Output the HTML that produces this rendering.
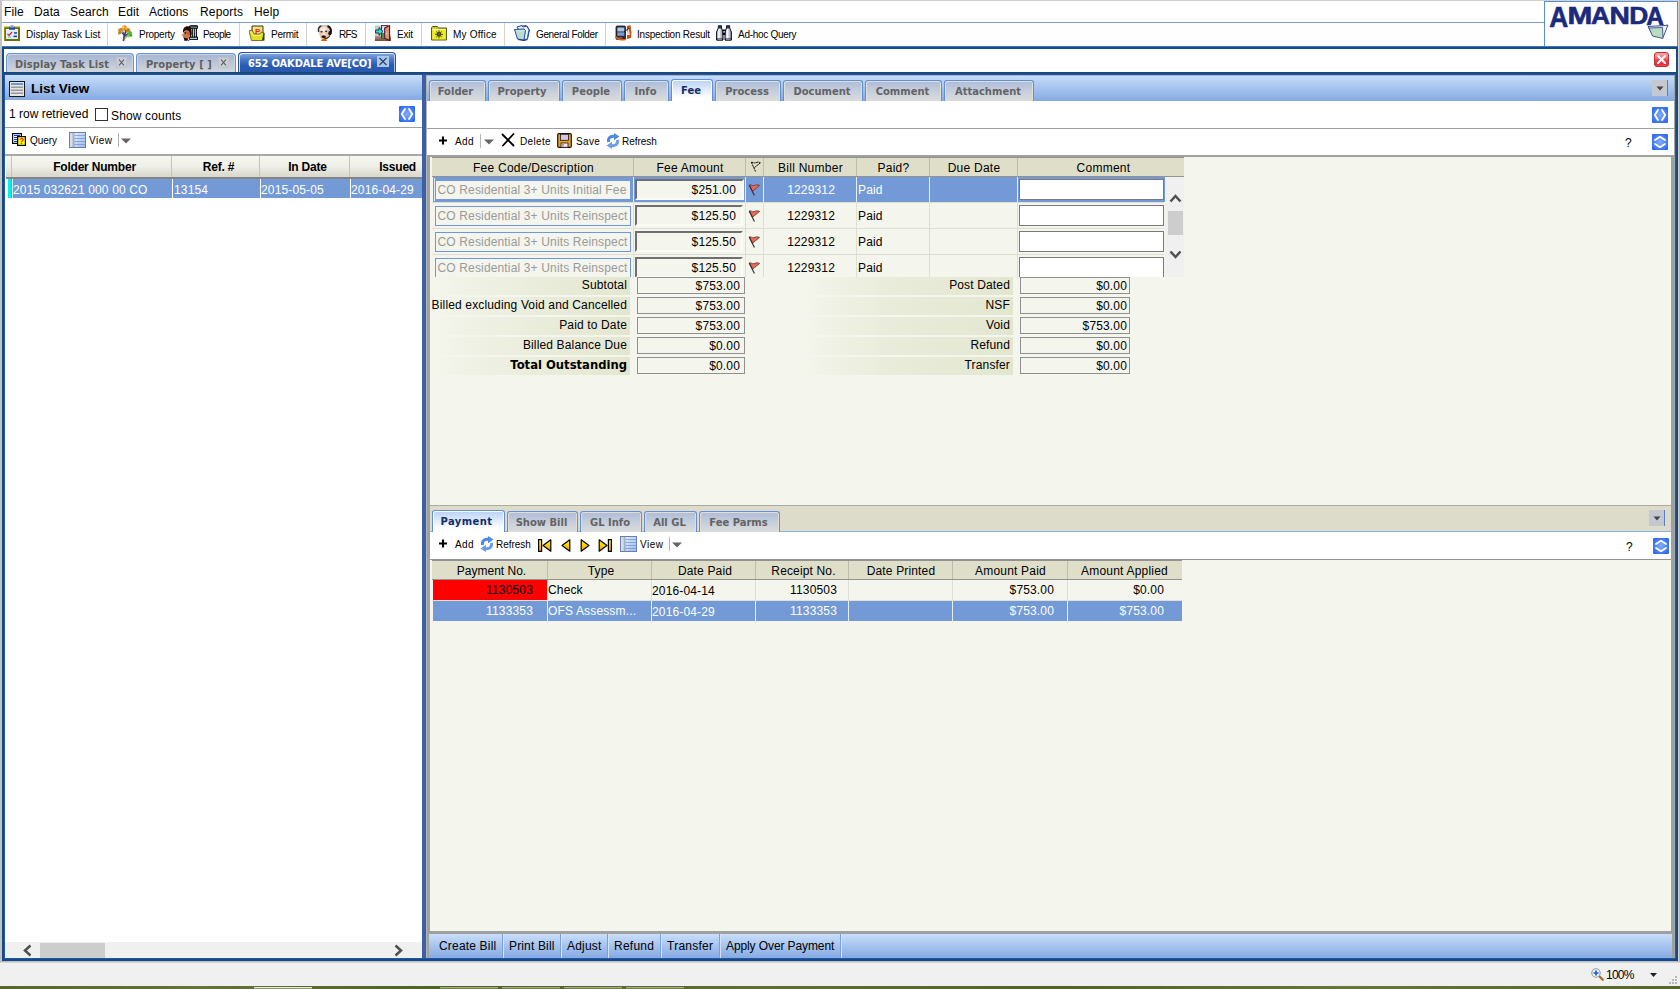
<!DOCTYPE html>
<html>
<head>
<meta charset="utf-8">
<title>AMANDA</title>
<style>
*{box-sizing:border-box;margin:0;padding:0}
html,body{width:1680px;height:989px;overflow:hidden;background:#fff}
body{font-family:"Liberation Sans",sans-serif;font-size:12px;color:#000;position:relative}
.a{position:absolute}
.t{position:absolute;white-space:nowrap;line-height:14px;letter-spacing:.15px}
.tb{position:absolute;white-space:nowrap;font-size:10px;line-height:12px;letter-spacing:-.05px}
.tabf{font-family:"DejaVu Sans Condensed","DejaVu Sans","Liberation Sans",sans-serif;font-weight:700}
.sep{position:absolute;width:1px;background:#d5d2c6}
/* tabs */
.ttab{position:absolute;top:53px;height:19px;border:1px solid #6492dc;border-bottom:none;border-radius:4px 4px 0 0;background:linear-gradient(#a3b4d3,#bcc6d8 50%,#d3d6da);color:#5f5f5f;font-size:11px;line-height:17px;white-space:nowrap;letter-spacing:.1px;box-shadow:inset 1px 1px 0 #cfd6e2,inset -1px 0 0 #cfd6e2}
.ttab.on{top:52px;height:20px;background:linear-gradient(#8aa9de,#4b78c4 35%,#2b5bb0 65%,#2958ac);border-color:#2a56a8;color:#fff;box-shadow:inset 1px 1px 0 rgba(255,255,255,.8),inset -1px 0 0 rgba(255,255,255,.6)}
.rtab{position:absolute;top:80px;height:21px;padding:1px 2px 0 0;border:1px solid #5f8fd6;border-bottom:none;border-radius:3px 3px 0 0;background:linear-gradient(#aebcd8,#c6cedc 50%,#dbdcdb);color:#636363;font-size:11.1px;line-height:19px;text-align:center;white-space:nowrap;box-shadow:inset 1px 1px 0 #e2dfd8,inset -1px 0 0 #e2dfd8}
.rtab.on{top:79px;height:22px;background:linear-gradient(#b9d1f5,#dce8fa 40%,#fff 85%);color:#122f6c;box-shadow:inset 1px 1px 0 #fff,inset -1px 0 0 #fff}
.btab{position:absolute;top:511px;height:21px;padding:1px 2px 0 0;border:1px solid #5f8fd6;border-bottom:none;border-radius:3px 3px 0 0;background:linear-gradient(#aebcd8,#c6cedc 50%,#dbdcdb);color:#636363;font-size:11.1px;line-height:19px;text-align:center;white-space:nowrap;box-shadow:inset 1px 1px 0 #e2dfd8,inset -1px 0 0 #e2dfd8}
.btab.on{top:510px;height:22px;background:linear-gradient(#b9d1f5,#dce8fa 40%,#fff 85%);color:#122f6c;box-shadow:inset 1px 1px 0 #fff,inset -1px 0 0 #fff}
.hd{position:absolute;text-align:center;white-space:nowrap;letter-spacing:.15px}
.inp{position:absolute;height:20px;border:1px solid #6f97dc;background:#f4f5ec;color:#9a9a9a;white-space:nowrap;overflow:hidden;line-height:19px;padding-left:1.5px;letter-spacing:.15px}
.amt{position:absolute;height:19px;border:2px solid;border-color:#6f6f6f #fbfbf8 #fbfbf8 #6f6f6f;background:#f4f5ec;text-align:right;padding-right:6px;line-height:19px;letter-spacing:.15px}
.cmt{position:absolute;left:1019px;width:145px;height:21px;border:1px solid #7a7a7a;background:#fff}
.sum{position:absolute;height:17px;border:1px solid #8e8f8f;background:#f4f5ec;text-align:right;padding-right:4px;line-height:17px;letter-spacing:.15px}
.lab{position:absolute;height:18px;text-align:right;padding-right:3px;line-height:17px;white-space:nowrap;letter-spacing:.15px}
.cell{position:absolute;white-space:nowrap;line-height:14px;letter-spacing:.15px}
</style>
</head>
<body>
<!-- window chrome -->
<div class="a" style="left:0;top:0;width:1680px;height:1px;background:#d0d0d0"></div>
<div class="a" style="left:0;top:0;width:2px;height:962px;background:#c3c3c3"></div>
<div class="a" style="left:1678px;top:0;width:1px;height:962px;background:#d4d0cc"></div><div class="a" style="left:1679px;top:0;width:1px;height:962px;background:#b4b4b4"></div>

<!-- MENUBAR -->
<div id="menubar">
<span class="t" style="left:4px;top:5px">File</span>
<span class="t" style="left:34px;top:5px">Data</span>
<span class="t" style="left:70px;top:5px">Search</span>
<span class="t" style="left:118px;top:5px">Edit</span>
<span class="t" style="left:149px;top:5px;letter-spacing:0">Actions</span>
<span class="t" style="left:200px;top:5px">Reports</span>
<span class="t" style="left:254px;top:5px">Help</span>
</div>
<div class="a" style="left:2px;top:22px;width:1542px;height:1px;background:#7d9fd8"></div>

<!-- TOOLBAR -->
<div id="toolbar">
<svg class="a" style="left:4px;top:25px" width="16" height="16" viewBox="0 0 16 16"><rect x="0" y="2" width="16" height="14" fill="#6c7008"/><path d="M0 16V2h16" stroke="#a4a80c" stroke-width="1.2" fill="none"/><rect x="2" y="4" width="12" height="10" fill="#dcecfc"/><rect x="2" y="4" width="12" height="1.2" fill="#fff"/><rect x="5" y="1.8" width="6" height="3" fill="#2c4aa4"/><rect x="6.3" y="0" width="3.4" height="2.5" fill="#b4c0dc"/><rect x="7.3" y=".8" width="1.4" height="1" fill="#5a6a9a"/><path d="M3.5 8.8l1.5 1.5L8 7" stroke="#e81830" stroke-width="1.2" fill="none"/><rect x="10" y="7.2" width="3" height="1.5" fill="#203c98"/><rect x="9.5" y="10.6" width="3.5" height="1.5" fill="#203c98"/><rect x="4" y="11.5" width="3" height="1" fill="#8c9ccc"/></svg>
<svg class="a" style="left:117px;top:25px" width="16" height="16" viewBox="0 0 16 16"><path d="M6.5 16L7.2 10 4 6.5M7.2 10.5L9.5 5.5M7 12l4.5-4" stroke="#3c3a70" stroke-width="1.6" fill="none"/><path d="M7 15l3.5-4.5" stroke="#7a9a30" stroke-width="1" fill="none"/><circle cx="3.8" cy="5.5" r="2.6" fill="#d08424"/><circle cx="7.5" cy="3" r="2.7" fill="#e09a2c"/><circle cx="10.8" cy="5.2" r="2.3" fill="#c87a28"/><circle cx="2.5" cy="8" r="1.5" fill="#9a8a2c"/><circle cx="6" cy="2.3" r="1.2" fill="#f2d468"/><circle cx="9.5" cy="3.2" r="1" fill="#f0c050"/><circle cx="5" cy="6.5" r="1" fill="#e8b048"/><circle cx="12.8" cy="8.5" r="2.4" fill="#58b832"/><circle cx="11.3" cy="11" r="1.6" fill="#7cca4a"/><circle cx="14" cy="10.5" r="1.2" fill="#3e9a28"/><path d="M6 6.5l1.5 2.5M8.5 5l-.5 3" stroke="#4a4a80" stroke-width=".9"/></svg>
<svg class="a" style="left:181px;top:25px" width="17" height="16" viewBox="0 0 17 16"><path d="M9 1.2L12.7 0l3.8 1.2z" fill="#a8d8d8" stroke="#000" stroke-width=".8"/><rect x="8.6" y="1.2" width="8" height="2" fill="#a8d8d8" stroke="#000" stroke-width=".9"/><rect x="9.7" y="3.2" width="5.8" height="9" fill="#c0e4e4" stroke="#000" stroke-width=".9"/><path d="M11.6 3.2v9M13.6 3.2v9" stroke="#000" stroke-width=".9"/><rect x="8.6" y="12.2" width="8" height="2.2" fill="#a8d8d8" stroke="#000" stroke-width=".9"/><path d="M2 7C1.5 2 6.5 -.2 10 2.5l.8 6.5-2 4-.6-6C6.5 5 4 5.2 2.6 7.5z" fill="#1a0c08"/><path d="M2.5 7C4 4.8 7 5 8.2 6.5l.5 4.5-1.5 3.7-3.2.5-1.5-2.5-1.3-2.2 1.1-1.3z" fill="#d07646"/><path d="M5 6.5c1 0 2.2.3 3 1l.4 3.5c-1-.5-2-2-3.4-4.5z" fill="#b85c34"/><ellipse cx="1.7" cy="9.9" rx="1.2" ry="1" fill="#f28a8a"/><path d="M3.5 7.6l1.8.2" stroke="#1a0c08" stroke-width=".9"/><circle cx="4.3" cy="8.6" r=".6" fill="#1a0c08"/><path d="M2.6 12.6l4.6 1.2-1 2.2-2.7-.6z" fill="#1a0c08"/><path d="M3 15.5l1 .5M7 15.3l1.5.7" stroke="#2a4ae0" stroke-width="1"/></svg>
<svg class="a" style="left:249px;top:25px" width="16" height="16" viewBox="0 0 16 16"><path d="M3 1h11v11H3z" fill="#f2d86a" stroke="#3a3a20" stroke-width="1"/><path d="M4 2h9v7H4z" fill="#f6e27e"/><text x="8.6" y="8.5" font-family="Liberation Sans, sans-serif" font-weight="700" font-size="8" fill="#e8281a" text-anchor="middle">P</text><path d="M0 6l3-1 2 4h6l1.5-2 2.5 1-1 7.5H2.5z" fill="#e4e020" stroke="#55551a" stroke-width=".8"/><path d="M13 15.5h2.5V8l-1-.5z" fill="#3a3a1a"/><path d="M1 7l2 .5 1.5 3h7l1-1.5" fill="none" stroke="#f8f890" stroke-width=".8"/></svg>
<svg class="a" style="left:316px;top:25px" width="17" height="16" viewBox="0 0 17 16"><path d="M3 2.5C5 .2 11 .2 13 2.5L13.5 8C13 12 10 15 8 15.5 6 15 3.5 12 3 8z" fill="#f2c4a6"/><ellipse cx="7.5" cy="4.5" rx="3.2" ry="2.3" fill="#fff" opacity=".75"/><ellipse cx="7.8" cy="9" rx="1.6" ry="1.4" fill="#fff" opacity=".6"/><path d="M2.6 7C1.8 3.5 3 1.5 5.5 .8" stroke="#3a3030" stroke-width="1.5" fill="none"/><path d="M5 .8C8 -.3 11 .2 12.5 1.5" stroke="#b8b0a8" stroke-width="1" fill="none"/><path d="M11.5 1C15 2.2 15.5 6 14.3 9" stroke="#151515" stroke-width="2.2" fill="none"/><ellipse cx="13.8" cy="8.3" rx="1.5" ry="2.3" fill="#151515"/><path d="M13.8 10.5C12.5 13.3 10 13.8 8 12.8" stroke="#2a2a2a" stroke-width="1.2" fill="none"/><ellipse cx="5.6" cy="6.8" rx="1.2" ry=".8" fill="#1c2848"/><ellipse cx="10" cy="6.3" rx="1.2" ry=".8" fill="#1c2848"/><ellipse cx="7.6" cy="11.8" rx="2.2" ry="1.2" fill="#1a1010"/><path d="M4.8 15l3.2-1.5 3.5 1.5-1 1H5.5z" fill="#d8601a"/></svg>
<svg class="a" style="left:375px;top:25px" width="16" height="16" viewBox="0 0 16 16"><defs><linearGradient id="fl" x1="0" y1="0" x2="0" y2="1"><stop offset="0" stop-color="#b89888"/><stop offset="1" stop-color="#6e4c3c"/></linearGradient></defs><rect x="0" y=".5" width="8" height="11" fill="#b2d8c4"/><rect x="0" y="11" width="16" height="5" fill="url(#fl)"/><rect x="6.5" y=".6" width="6" height="12.4" fill="#cfe4f6" stroke="#5a1030" stroke-width=".9"/><rect x="7" y="8" width="2.5" height="4.5" fill="#3a9a3a"/><path d="M9.7 3L14.6 .6v15L9.7 13.2z" fill="#c8906a" stroke="#5a1030" stroke-width="1.1" stroke-linejoin="round"/><path d="M10.5 4l3-1.5v11.5l-3-1.3z" fill="#d8a880" opacity=".6"/><rect x="11.2" y="8" width="1" height="1.3" fill="#f4e8e0"/><path d="M.6 5H4V2.6L8 6.5 4 10.4V8H.6z" fill="#22e6e6" stroke="#4a0a2a" stroke-width=".9" stroke-linejoin="round"/></svg>
<svg class="a" style="left:431px;top:26px" width="16" height="15" viewBox="0 0 16 15"><path d="M.5 3V1.5L1.5.5h5l1 1.5h8V14H.5z" fill="#c8c83a" stroke="#5a5a14" stroke-width="1"/><rect x="1.2" y="3" width="13.6" height="10.3" fill="#ecec28"/><path d="M1.2 3h13.6v1H1.2z" fill="#f8f8a0"/><circle cx="8" cy="8.3" r="2.3" fill="#3a3a14"/><path d="M8 4.3v8M4 8.3h8M5.2 5.5l5.6 5.6M10.8 5.5l-5.6 5.6" stroke="#4a4a10" stroke-width="1"/><circle cx="8" cy="8.3" r="1" fill="#6a6a10"/></svg>
<svg class="a" style="left:514px;top:25px" width="16" height="16" viewBox="0 0 16 16"><path d="M3 2l5-1.5 1 1.5 4-1 2.5 4-2 9-3 .5z" fill="#e8f0f8" stroke="#2a4a9a" stroke-width="1"/><path d="M8 1l4-.5 3 4-1.5 8" fill="none" stroke="#2a4a9a" stroke-width=".9"/><path d="M.5 4.5l9.5-.5 1.5 1.5-1.5 9.5-6.5-1z" fill="#b8dcd0" stroke="#2a4a9a" stroke-width="1"/><path d="M2 6l7.5-.4" stroke="#d8f0e8" stroke-width=".8"/><path d="M4 14.5l6 1 3.5-1" stroke="#1a3a8a" stroke-width="1.2" fill="none"/></svg>
<svg class="a" style="left:615px;top:25px" width="17" height="16" viewBox="0 0 17 16"><path d="M12 1l3.5-1 1 8-.5 5-4 1z" fill="#c8501a"/><path d="M13.5 3l1.5 7h-3.5z" fill="#f0e0d0"/><rect x="1" y="1" width="9.5" height="13.5" rx="1.2" fill="#2a2a34" stroke="#15151c" stroke-width=".8"/><rect x="2.3" y="2.5" width="7" height="4" fill="#a8c4e8"/><rect x="2.3" y="7.3" width="7" height="3.5" fill="#7a9cd0"/><rect x="4" y="12" width="3.5" height="1.5" rx=".7" fill="#666"/><path d="M0 12c2 3 6 4 10 3.5l2-2-3 .5c-3 0-6-1-8-3z" fill="#d8601a"/><path d="M9 7l5-4" stroke="#222" stroke-width="1"/></svg>
<svg class="a" style="left:716px;top:25px" width="16" height="16" viewBox="0 0 16 16"><defs><linearGradient id="bg1" x1="0" y1="0" x2="1" y2="0"><stop offset="0" stop-color="#9aa4b4"/><stop offset=".35" stop-color="#fff"/><stop offset="1" stop-color="#7a8698"/></linearGradient></defs><path d="M.6 7L2.3 3V.8h3.2V3L7 7v8H.6z" fill="url(#bg1)" stroke="#0c0c14" stroke-width="1"/><path d="M9 7l1.5-4V.8h3.2V3L15.4 7v8H9z" fill="url(#bg1)" stroke="#0c0c14" stroke-width="1"/><rect x="2.3" y=".5" width="3.2" height="3" fill="#26344e"/><rect x="10.5" y=".5" width="3.2" height="3" fill="#26344e"/><rect x="6.5" y="4.5" width="3" height="5.5" fill="#0c0c14"/><rect x="7.5" y="6" width="1.2" height="1.6" fill="#fff"/><rect x=".6" y="13.5" width="6.4" height="2" fill="#1a1a22"/><rect x="9" y="13.5" width="6.4" height="2" fill="#1a1a22"/><path d="M1.5 14.5h4.5M10 14.5h4.5" stroke="#9aa4b4" stroke-width=".8"/></svg>
<span class="tb" style="left:26px;top:29px;letter-spacing:0px">Display Task List</span>
<span class="tb" style="left:139px;top:29px;letter-spacing:-0.26px">Property</span>
<span class="tb" style="left:203px;top:29px;letter-spacing:-0.6px">People</span>
<span class="tb" style="left:271px;top:29px;letter-spacing:-0.28px">Permit</span>
<span class="tb" style="left:339px;top:29px;letter-spacing:-0.8px">RFS</span>
<span class="tb" style="left:397px;top:29px;letter-spacing:-0.23px">Exit</span>
<span class="tb" style="left:453px;top:29px;letter-spacing:0.2px">My Office</span>
<span class="tb" style="left:536px;top:29px;letter-spacing:-0.36px">General Folder</span>
<span class="tb" style="left:637px;top:29px;letter-spacing:-0.23px">Inspection Result</span>
<span class="tb" style="left:738px;top:29px;letter-spacing:-0.28px">Ad-hoc Query</span>
<div class="sep" style="left:107px;top:23px;height:23px"></div>
<div class="sep" style="left:239px;top:23px;height:23px"></div>
<div class="sep" style="left:306px;top:23px;height:23px"></div>
<div class="sep" style="left:365px;top:23px;height:23px"></div>
<div class="sep" style="left:421px;top:23px;height:23px"></div>
<div class="sep" style="left:504px;top:23px;height:23px"></div>
<div class="sep" style="left:605px;top:23px;height:23px"></div>
</div>

<!-- LOGO -->
<div id="logo" class="a" style="left:1544px;top:1px;width:134px;height:45px;border:1px solid #5b8fd0;border-bottom:none;background:#fff">
<svg class="a" style="left:0;top:0" width="132" height="44" viewBox="0 0 132 44"><g font-family="Liberation Sans, sans-serif" font-weight="700" fill="#1c2a7c" stroke="#1c2a7c" stroke-width=".6"><text x="4.2" y="25.3" font-size="29" textLength="19" lengthAdjust="spacingAndGlyphs">A</text><text x="22.6" y="21.5" font-size="23.5" textLength="24.8" lengthAdjust="spacingAndGlyphs">M</text><text x="46" y="21.5" font-size="23.5" textLength="19" lengthAdjust="spacingAndGlyphs">A</text><text x="64.6" y="21.5" font-size="23.5" textLength="20.4" lengthAdjust="spacingAndGlyphs">N</text><text x="84.2" y="21.5" font-size="23.5" textLength="19" lengthAdjust="spacingAndGlyphs">D</text><text x="101.3" y="22.8" font-size="25" textLength="17.7" lengthAdjust="spacingAndGlyphs">A</text></g><path d="M103 24.5l17-1 3-.5-5 12.5-10-2z" fill="#eef6f2" stroke="#2a3a8c" stroke-width=".9"/><path d="M104 26l13.5-.5.5 11-10.5-2.5z" fill="#b8dcc0" stroke="#2a3a8c" stroke-width=".8"/></svg>
</div>

<!-- MAIN FRAME -->
<div id="frame" class="a" style="left:2px;top:47px;width:1676px;height:914px;border:2px solid #144b84;background:#fff"></div>
<div class="a" style="left:2px;top:46px;width:1676px;height:1px;background:#3f78c0"></div>
<div class="a" style="left:4px;top:74px;width:1672px;height:885px;border:1px solid #2354ae"></div>

<!-- TOP TABS -->
<div id="toptabs">
<div class="ttab tabf" style="left:6px;width:128px"><span class="a" style="left:8px;top:2px">Display Task List</span></div>
<svg class="a" style="left:116px;top:57px" width="11" height="11" viewBox="0 0 11 11"><rect x=".5" y=".5" width="10" height="10" fill="#c9ced6" stroke="#bfc4cc"/><path d="M3 2.5L8 8.5M8 2.5L3 8.5" stroke="#555" stroke-width="1.1" fill="none"/></svg>
<div class="ttab tabf" style="left:136px;width:100px"><span class="a" style="left:9px;top:2px">Property [ ]</span></div>
<svg class="a" style="left:218px;top:57px" width="11" height="11" viewBox="0 0 11 11"><rect x=".5" y=".5" width="10" height="10" fill="#c9ced6" stroke="#bfc4cc"/><path d="M3 2.5L8 8.5M8 2.5L3 8.5" stroke="#555" stroke-width="1.1" fill="none"/></svg>
<div class="ttab on tabf" style="left:238px;width:158px"><span class="a" style="left:9px;top:2px;letter-spacing:-.13px">652 OAKDALE AVE[CO]</span></div>
<svg class="a" style="left:377px;top:56px" width="12" height="11" viewBox="0 0 12 11"><rect width="12" height="11" fill="#a8c8f0"/><path d="M2.5 2L9.5 9M9.5 2L2.5 9" stroke="#2e3e50" stroke-width="1.1" fill="none"/></svg>
<svg class="a" style="left:1654px;top:52px" width="15" height="15" viewBox="0 0 15 15"><defs><linearGradient id="rg" x1="0" y1="0" x2="0" y2="1"><stop offset="0" stop-color="#f6b0b0"/><stop offset=".45" stop-color="#ee6670"/><stop offset=".55" stop-color="#ea3c48"/><stop offset=".9" stop-color="#e83040"/><stop offset="1" stop-color="#f07838"/></linearGradient></defs><rect x=".5" y=".5" width="14" height="14" rx="2.5" fill="url(#rg)" stroke="#c03038"/><path d="M4 4l7 7M11 4l-7 7" stroke="#fff" stroke-width="2" stroke-linecap="round"/></svg>
<div class="a" style="left:4px;top:72px;width:1672px;height:2px;background:#17497f"></div>
</div>

<!-- LEFT PANEL -->
<div id="left">
<div class="a" style="left:5px;top:75px;width:417px;height:25px;background:linear-gradient(#c9defa,#a9c6f0 45%,#86aae2)"></div>
<svg class="a" style="left:9px;top:81px" width="16" height="16" viewBox="0 0 16 16"><rect x=".5" y=".5" width="15" height="15" fill="#e4e4e4" stroke="#1a1a1a"/><rect x="2" y="2" width="12" height="2" fill="#6a9ad8"/><rect x="2" y="5.5" width="12" height="1.5" fill="#9a9a9a"/><rect x="2" y="8.5" width="12" height="1.5" fill="#9a9a9a"/><rect x="2" y="11.5" width="12" height="1.5" fill="#9a9a9a"/></svg>
<span class="a" style="left:31px;top:81px;font-weight:700;font-size:13.5px;line-height:16px;white-space:nowrap">List View</span>
<span class="t" style="left:9px;top:107px;letter-spacing:0">1 row retrieved</span>
<div class="a" style="left:95px;top:108px;width:13px;height:13px;border:1px solid #333;background:#fff"></div>
<span class="t" style="left:111px;top:109px;letter-spacing:.15px">Show counts</span>
<svg class="a" style="left:399px;top:106px" width="16" height="16" viewBox="0 0 16 16"><defs><radialGradient id="bb1" cx=".5" cy=".5" r=".7"><stop offset="0" stop-color="#86acfa"/><stop offset=".55" stop-color="#4a82f4"/><stop offset="1" stop-color="#1f5ce8"/></radialGradient></defs><rect width="16" height="16" rx="1.2" fill="url(#bb1)"/><path d="M6 3L2.8 8 6 13M10 3l3.2 5L10 13" stroke="#fff" stroke-width="1.8" fill="none" stroke-linecap="round" stroke-linejoin="round"/></svg>
<div class="a" style="left:5px;top:127px;width:417px;height:1px;background:#a0a0a0"></div>
<svg class="a" style="left:12px;top:133px" width="14" height="13" viewBox="0 0 14 13"><rect x=".6" y=".6" width="8.8" height="9.8" fill="#fff" stroke="#000" stroke-width="1.2"/><path d="M2 2.5h6M2 4.5h6M2 6.5h3.5M2 8.5h3.5" stroke="#1030f0" stroke-width="1"/><rect x="5.6" y="3.6" width="7.8" height="8.8" fill="#ffff00" stroke="#000" stroke-width="1.2"/><text x="9.5" y="11.3" font-size="8.5" font-weight="700" font-family="Liberation Sans, sans-serif" fill="#f01818" text-anchor="middle">?</text></svg>
<span class="tb" style="left:30px;top:135px">Query</span>
<svg class="a" style="left:69px;top:132px" width="17" height="16" viewBox="0 0 17 16"><defs><linearGradient id="vg1" x1="0" y1="0" x2="1" y2="1"><stop offset="0" stop-color="#e8f0fc"/><stop offset="1" stop-color="#9cbcee"/></linearGradient></defs><rect x=".5" y=".5" width="16" height="15" fill="url(#vg1)" stroke="#6a7fa6"/><rect x="1" y="1" width="3.5" height="14" fill="#c2cbdc"/><rect x="1.5" y="1" width="1" height="14" fill="#eef2f8"/><path d="M4.8 1v14" stroke="#7f90b2" stroke-width=".8"/><path d="M5.5 3.5h10.5M5.5 6.5h10.5M5.5 9.5h10.5M5.5 12.5h10.5" stroke="#6f96dc" stroke-width="1" opacity=".75"/><path d="M7.5 1v14" stroke="#fff" stroke-width=".8" opacity=".7" stroke-dasharray="1.5 1.5"/></svg>
<span class="tb" style="left:89px;top:135px;letter-spacing:.5px">View</span>
<div class="a" style="left:118px;top:133px;width:1px;height:14px;background:#b0b0b0"></div>
<svg class="a" style="left:121px;top:138px" width="10" height="6" viewBox="0 0 10 6"><path d="M0 .5h10L5 5.5z" fill="#666"/></svg>
<div class="a" style="left:5px;top:154px;width:417px;height:2px;background:#a8a8a8"></div>
<div class="a" style="left:6px;top:156px;width:416px;height:23px;background:linear-gradient(#f7f7f2,#efefe8 50%,#dddbcf 90%);border-bottom:2px solid #858580"></div>
<div class="a" style="left:11px;top:156px;width:1px;height:21px;background:#c4c4bc"></div>
<div class="a" style="left:171px;top:156px;width:1px;height:21px;background:#c4c4bc"></div>
<div class="a" style="left:259px;top:156px;width:1px;height:21px;background:#c4c4bc"></div>
<div class="a" style="left:349px;top:156px;width:1px;height:21px;background:#c4c4bc"></div>
<div class="hd" style="left:15px;top:160px;width:159px;font-weight:700;letter-spacing:-.2px">Folder Number</div>
<div class="hd" style="left:175px;top:160px;width:87px;font-weight:700;letter-spacing:-.2px">Ref. #</div>
<div class="hd" style="left:263px;top:160px;width:89px;font-weight:700;letter-spacing:-.2px">In Date</div>
<div class="hd" style="left:350px;top:160px;width:66px;font-weight:700;letter-spacing:-.2px;text-align:right">Issued</div>
<div class="a" style="left:11px;top:179px;width:411px;height:19px;background:#739ad6"></div><div class="a" style="left:12px;top:179px;width:1px;height:19px;background:#e4ecf8"></div>
<div class="a" style="left:8px;top:179px;width:3px;height:19px;background:#00f0f0"></div>
<div class="a" style="left:172px;top:179px;width:1px;height:19px;background:#fff"></div>
<div class="a" style="left:260px;top:179px;width:1px;height:19px;background:#fff"></div>
<div class="a" style="left:350px;top:179px;width:1px;height:19px;background:#fff"></div>
<span class="cell" style="left:13px;top:183px;color:#fff">2015 032621 000 00 CO</span>
<span class="cell" style="left:174px;top:183px;color:#fff">13154</span>
<span class="cell" style="left:261px;top:183px;color:#fff">2015-05-05</span>
<span class="cell" style="left:351px;top:183px;color:#fff">2016-04-29</span>
<div class="a" style="left:5px;top:942px;width:417px;height:16px;background:#f0f0f0"></div>
<div class="a" style="left:40px;top:943px;width:65px;height:15px;background:#cdcdcd"></div>
<svg class="a" style="left:22px;top:944px" width="11" height="13" viewBox="0 0 11 13"><path d="M8.5 1.5L3 6.5l5.5 5" stroke="#505050" stroke-width="2.5" fill="none"/></svg>
<svg class="a" style="left:393px;top:944px" width="11" height="13" viewBox="0 0 11 13"><path d="M2.5 1.5L8 6.5l-5.5 5" stroke="#505050" stroke-width="2.5" fill="none"/></svg>
<div class="a" style="left:422px;top:75px;width:4px;height:883px;background:#3c60a8"></div><div class="a" style="left:426px;top:75px;width:1px;height:883px;background:#b4b4b0"></div>
</div>

<!-- RIGHT PANEL -->
<div id="right">
<div class="a" style="left:427px;top:75px;width:1248px;height:26px;background:linear-gradient(#c9defa,#a9c6f0 45%,#86aae2)"></div>
<div class="a" style="left:427px;top:75px;width:1247px;height:1px;background:#aab0b4"></div>
<div class="rtab tabf" style="left:429px;width:57px;padding-right:4px">Folder</div>
<div class="rtab tabf" style="left:488px;width:72px;padding-right:4px">Property</div>
<div class="rtab tabf" style="left:562px;width:60px">People</div>
<div class="rtab tabf" style="left:624px;width:45px">Info</div>
<div class="rtab tabf on" style="left:671px;width:42px">Fee</div>
<div class="rtab tabf" style="left:715px;width:66px">Process</div>
<div class="rtab tabf" style="left:783px;width:80px">Document</div>
<div class="rtab tabf" style="left:865px;width:77px">Comment</div>
<div class="rtab tabf" style="left:944px;width:90px">Attachment</div>
<svg class="a" style="left:1652px;top:80px" width="16" height="16" viewBox="0 0 16 16"><rect width="16" height="16" fill="#c4c8d0"/><rect x="15" width="1" height="16" fill="#5a7ec8"/><path d="M4.5 6.5h7l-3.5 4z" fill="#444"/></svg>
<div class="a" style="left:427px;top:101px;width:1248px;height:54px;background:#fff"></div>
<div class="a" style="left:427px;top:128px;width:1248px;height:1px;background:#a0a0a0"></div>
<svg class="a" style="left:1652px;top:107px" width="16" height="16" viewBox="0 0 16 16"><defs><radialGradient id="bb2" cx=".5" cy=".5" r=".7"><stop offset="0" stop-color="#86acfa"/><stop offset=".55" stop-color="#4a82f4"/><stop offset="1" stop-color="#1f5ce8"/></radialGradient></defs><rect width="16" height="16" rx="1.2" fill="url(#bb2)"/><path d="M6 3L2.8 8 6 13M10 3l3.2 5L10 13" stroke="#fff" stroke-width="1.8" fill="none" stroke-linecap="round" stroke-linejoin="round"/></svg>
<svg class="a" style="left:1652px;top:134px" width="16" height="16" viewBox="0 0 16 16"><defs><radialGradient id="bb3" cx=".5" cy=".5" r=".7"><stop offset="0" stop-color="#86acfa"/><stop offset=".55" stop-color="#4a82f4"/><stop offset="1" stop-color="#1f5ce8"/></radialGradient></defs><rect width="16" height="16" rx="1.2" fill="url(#bb3)"/><path d="M3 6L8 2.8 13 6M3 10l5 3.2L13 10" stroke="#fff" stroke-width="1.8" fill="none" stroke-linecap="round" stroke-linejoin="round"/></svg>
<span class="t" style="left:1625px;top:136px;letter-spacing:0">?</span>
<svg class="a" style="left:439px;top:136px" width="8" height="9" viewBox="0 0 8 9"><path d="M4 .5v8M0 4.5h8" stroke="#000" stroke-width="2.1"/></svg>
<span class="tb" style="left:455px;top:136px;letter-spacing:.4px">Add</span>
<div class="a" style="left:480px;top:134px;width:1px;height:14px;background:#b8b8b8"></div>
<svg class="a" style="left:484px;top:139px" width="10" height="6" viewBox="0 0 10 6"><path d="M0 .5h10L5 5.5z" fill="#666"/></svg>
<svg class="a" style="left:501px;top:133px" width="15" height="14" viewBox="0 0 15 14"><path d="M1.5 1.5l11 11M12.5 1L2 12.5" stroke="#000" stroke-width="1.8" stroke-linecap="round"/></svg>
<span class="tb" style="left:520px;top:136px;letter-spacing:.35px">Delete</span>
<svg class="a" style="left:557px;top:133px" width="15" height="15" viewBox="0 0 15 15"><rect x=".7" y=".7" width="13.6" height="13.6" rx="1" fill="#f0a020" stroke="#1a1a1a" stroke-width="1.2"/><rect x="3.5" y="1.3" width="8" height="6" fill="#d8c4e0" stroke="#1a1a1a" stroke-width=".8"/><rect x="4" y="10" width="7" height="4.3" fill="#f4eaf4" stroke="#1a1a1a" stroke-width=".8"/><rect x="5" y="10.8" width="2" height="2.8" fill="#b098b8"/></svg>
<span class="tb" style="left:576px;top:136px;letter-spacing:.35px">Save</span>
<svg class="a" style="left:606px;top:133px" width="14" height="16" viewBox="0 0 14 16"><path d="M2.5 9C2 4.5 4.5 3 8.5 3.3" stroke="#4f88e6" stroke-width="3" fill="none"/><path d="M8 0l5.5 3.6L8 7.2z" fill="#4f88e6"/><path d="M11.5 7c.5 4.5-2 6-6 5.7" stroke="#6c9cee" stroke-width="3" fill="none"/><path d="M6 8.8L.5 12.4 6 16z" fill="#6c9cee"/></svg>
<span class="tb" style="left:622px;top:136px">Refresh</span>
<div class="a" style="left:427px;top:155px;width:1248px;height:803px;background:#a0a0a0"></div>
<div class="a" style="left:430px;top:157px;width:1241px;height:774px;background:#f4f5ec"></div>
<div class="a" style="left:432px;top:157px;width:752px;height:20px;background:#dedec9;border-top:1px solid #929290;border-bottom:1px solid #929290"></div>
<div class="hd" style="left:433px;top:161px;width:201px;letter-spacing:.25px">Fee Code/Description</div>
<div class="a" style="left:633px;top:158px;width:1px;height:18px;background:#bdbdae"></div>
<div class="hd" style="left:634px;top:161px;width:112px;letter-spacing:.25px">Fee Amount</div>
<div class="a" style="left:745px;top:158px;width:1px;height:18px;background:#bdbdae"></div>
<div class="a" style="left:763px;top:158px;width:1px;height:18px;background:#bdbdae"></div>
<div class="hd" style="left:764px;top:161px;width:93px;letter-spacing:.25px">Bill Number</div>
<div class="a" style="left:856px;top:158px;width:1px;height:18px;background:#bdbdae"></div>
<div class="hd" style="left:857px;top:161px;width:73px;letter-spacing:.25px">Paid?</div>
<div class="a" style="left:929px;top:158px;width:1px;height:18px;background:#bdbdae"></div>
<div class="hd" style="left:930px;top:161px;width:88px;letter-spacing:.25px">Due Date</div>
<div class="a" style="left:1017px;top:158px;width:1px;height:18px;background:#bdbdae"></div>
<div class="hd" style="left:1020px;top:161px;width:167px;letter-spacing:.25px">Comment</div>
<svg class="a" style="left:749px;top:161px" width="12" height="11" viewBox="0 0 12 11"><path d="M2 1.5c1.5-.8 3 1 4.5 .3s3-1 5 0L5.5 6.5M2.5 1.5L6.5 10.5" stroke="#000" stroke-width="1" fill="none" stroke-dasharray="2 .6"/></svg>
<div class="a" style="left:430px;top:176px;width:760px;height:101px;overflow:hidden">
<div class="a" style="left:3px;top:1px;width:732px;height:25px;background:#739ad6"></div>
<div class="a" style="left:4px;top:2px;width:1px;height:23px;background:#dfe8f6"></div>
<div class="a" style="left:203px;top:1px;width:1px;height:25px;background:#e8eef8"></div>
<div class="a" style="left:315px;top:1px;width:1px;height:25px;background:#e8eef8"></div>
<div class="a" style="left:333px;top:1px;width:1px;height:25px;background:#e8eef8"></div>
<div class="a" style="left:426px;top:1px;width:1px;height:25px;background:#e8eef8"></div>
<div class="a" style="left:499px;top:1px;width:1px;height:25px;background:#e8eef8"></div>
<div class="a" style="left:587px;top:1px;width:1px;height:25px;background:#e8eef8"></div>
<div class="inp" style="left:5px;top:4px;width:196px;border-color:#739ad6;">CO Residential 3+ Units Initial Fee</div>
<div class="amt" style="left:205px;top:3px;width:109px;height:21px;padding-right:6px">$251.00</div>
<svg class="a" style="left:318px;top:8px" width="12" height="12" viewBox="0 0 12 12"><path d="M1.2 1c1.8-1 3 1.4 4.8 .6s3.2-1.2 5.6-.2L4.6 7.2z" fill="#ea6a58" stroke="#5a2a24" stroke-width=".7"/><path d="M1.2 1l5.2 10.5" stroke="#3a3038" stroke-width="1.2"/></svg>
<span class="cell" style="left:334px;top:7px;width:71px;text-align:right;color:#fff">1229312</span>
<span class="cell" style="left:428px;top:7px;color:#fff">Paid</span>
<div class="cmt" style="left:589px;top:3px"></div>
<div class="a" style="left:2px;top:26px;width:732px;height:1px;background:#deded4"></div>
<div class="a" style="left:203px;top:26px;width:1px;height:26px;background:#deded4"></div>
<div class="a" style="left:315px;top:26px;width:1px;height:26px;background:#deded4"></div>
<div class="a" style="left:333px;top:26px;width:1px;height:26px;background:#deded4"></div>
<div class="a" style="left:426px;top:26px;width:1px;height:26px;background:#deded4"></div>
<div class="a" style="left:499px;top:26px;width:1px;height:26px;background:#deded4"></div>
<div class="a" style="left:587px;top:26px;width:1px;height:26px;background:#deded4"></div>
<div class="inp" style="left:5px;top:30px;width:196px;">CO Residential 3+ Units Reinspect</div>
<div class="amt" style="left:205px;top:29px;width:108px;height:21px;padding-right:5px">$125.50</div>
<svg class="a" style="left:318px;top:34px" width="12" height="12" viewBox="0 0 12 12"><path d="M1.2 1c1.8-1 3 1.4 4.8 .6s3.2-1.2 5.6-.2L4.6 7.2z" fill="#ea6a58" stroke="#5a2a24" stroke-width=".7"/><path d="M1.2 1l5.2 10.5" stroke="#3a3038" stroke-width="1.2"/></svg>
<span class="cell" style="left:334px;top:33px;width:71px;text-align:right;color:#000">1229312</span>
<span class="cell" style="left:428px;top:33px;color:#000">Paid</span>
<div class="cmt" style="left:589px;top:29px"></div>
<div class="a" style="left:2px;top:52px;width:732px;height:1px;background:#deded4"></div>
<div class="a" style="left:203px;top:52px;width:1px;height:26px;background:#deded4"></div>
<div class="a" style="left:315px;top:52px;width:1px;height:26px;background:#deded4"></div>
<div class="a" style="left:333px;top:52px;width:1px;height:26px;background:#deded4"></div>
<div class="a" style="left:426px;top:52px;width:1px;height:26px;background:#deded4"></div>
<div class="a" style="left:499px;top:52px;width:1px;height:26px;background:#deded4"></div>
<div class="a" style="left:587px;top:52px;width:1px;height:26px;background:#deded4"></div>
<div class="inp" style="left:5px;top:56px;width:196px;">CO Residential 3+ Units Reinspect</div>
<div class="amt" style="left:205px;top:55px;width:108px;height:21px;padding-right:5px">$125.50</div>
<svg class="a" style="left:318px;top:60px" width="12" height="12" viewBox="0 0 12 12"><path d="M1.2 1c1.8-1 3 1.4 4.8 .6s3.2-1.2 5.6-.2L4.6 7.2z" fill="#ea6a58" stroke="#5a2a24" stroke-width=".7"/><path d="M1.2 1l5.2 10.5" stroke="#3a3038" stroke-width="1.2"/></svg>
<span class="cell" style="left:334px;top:59px;width:71px;text-align:right;color:#000">1229312</span>
<span class="cell" style="left:428px;top:59px;color:#000">Paid</span>
<div class="cmt" style="left:589px;top:55px"></div>
<div class="a" style="left:2px;top:78px;width:732px;height:1px;background:#deded4"></div>
<div class="a" style="left:203px;top:78px;width:1px;height:26px;background:#deded4"></div>
<div class="a" style="left:315px;top:78px;width:1px;height:26px;background:#deded4"></div>
<div class="a" style="left:333px;top:78px;width:1px;height:26px;background:#deded4"></div>
<div class="a" style="left:426px;top:78px;width:1px;height:26px;background:#deded4"></div>
<div class="a" style="left:499px;top:78px;width:1px;height:26px;background:#deded4"></div>
<div class="a" style="left:587px;top:78px;width:1px;height:26px;background:#deded4"></div>
<div class="inp" style="left:5px;top:82px;width:196px;">CO Residential 3+ Units Reinspect</div>
<div class="amt" style="left:205px;top:81px;width:108px;height:21px;padding-right:5px">$125.50</div>
<svg class="a" style="left:318px;top:86px" width="12" height="12" viewBox="0 0 12 12"><path d="M1.2 1c1.8-1 3 1.4 4.8 .6s3.2-1.2 5.6-.2L4.6 7.2z" fill="#ea6a58" stroke="#5a2a24" stroke-width=".7"/><path d="M1.2 1l5.2 10.5" stroke="#3a3038" stroke-width="1.2"/></svg>
<span class="cell" style="left:334px;top:85px;width:71px;text-align:right;color:#000">1229312</span>
<span class="cell" style="left:428px;top:85px;color:#000">Paid</span>
<div class="cmt" style="left:589px;top:81px"></div>
<div class="a" style="left:735px;top:1px;width:19px;height:100px;background:#f0f0f0"></div>
<div class="a" style="left:738px;top:35px;width:15px;height:24px;background:#cdcdcd"></div>
<svg class="a" style="left:739px;top:17px" width="13" height="10" viewBox="0 0 13 10"><path d="M1.5 8.5L6.5 3l5 5.5" stroke="#505050" stroke-width="2.5" fill="none"/></svg>
<svg class="a" style="left:739px;top:74px" width="13" height="10" viewBox="0 0 13 10"><path d="M1.5 1.5L6.5 7l5-5.5" stroke="#505050" stroke-width="2.5" fill="none"/></svg>
</div>
<div class="lab" style="left:430px;top:277px;width:200px;background:linear-gradient(90deg,rgba(227,230,207,0) 0,rgba(227,230,207,.5) 45%,#e3e6cf 100%);">Subtotal</div>
<div class="sum" style="left:637px;top:277px;width:108px">$753.00</div>
<div class="lab" style="left:800px;top:277px;width:213px;background:linear-gradient(90deg,rgba(227,230,207,0) 0,rgba(227,230,207,.6) 40%,#e3e6cf 100%)">Post Dated</div>
<div class="sum" style="left:1020px;top:277px;width:110px;padding-right:2px">$0.00</div>
<div class="lab" style="left:430px;top:297px;width:200px;background:linear-gradient(90deg,rgba(227,230,207,0) 0,rgba(227,230,207,.5) 45%,#e3e6cf 100%);">Billed excluding Void and Cancelled</div>
<div class="sum" style="left:637px;top:297px;width:108px">$753.00</div>
<div class="lab" style="left:800px;top:297px;width:213px;background:linear-gradient(90deg,rgba(227,230,207,0) 0,rgba(227,230,207,.6) 40%,#e3e6cf 100%)">NSF</div>
<div class="sum" style="left:1020px;top:297px;width:110px;padding-right:2px">$0.00</div>
<div class="lab" style="left:430px;top:317px;width:200px;background:linear-gradient(90deg,rgba(227,230,207,0) 0,rgba(227,230,207,.5) 45%,#e3e6cf 100%);">Paid to Date</div>
<div class="sum" style="left:637px;top:317px;width:108px">$753.00</div>
<div class="lab" style="left:800px;top:317px;width:213px;background:linear-gradient(90deg,rgba(227,230,207,0) 0,rgba(227,230,207,.6) 40%,#e3e6cf 100%)">Void</div>
<div class="sum" style="left:1020px;top:317px;width:110px;padding-right:2px">$753.00</div>
<div class="lab" style="left:430px;top:337px;width:200px;background:linear-gradient(90deg,rgba(227,230,207,0) 0,rgba(227,230,207,.5) 45%,#e3e6cf 100%);">Billed Balance Due</div>
<div class="sum" style="left:637px;top:337px;width:108px">$0.00</div>
<div class="lab" style="left:800px;top:337px;width:213px;background:linear-gradient(90deg,rgba(227,230,207,0) 0,rgba(227,230,207,.6) 40%,#e3e6cf 100%)">Refund</div>
<div class="sum" style="left:1020px;top:337px;width:110px;padding-right:2px">$0.00</div>
<div class="lab" style="left:430px;top:357px;width:200px;background:linear-gradient(90deg,rgba(227,230,207,0) 0,rgba(227,230,207,.5) 45%,#e3e6cf 100%);font-family:'DejaVu Sans','Liberation Sans',sans-serif;font-weight:700;font-size:11.6px;letter-spacing:0;">Total Outstanding</div>
<div class="sum" style="left:637px;top:357px;width:108px">$0.00</div>
<div class="lab" style="left:800px;top:357px;width:213px;background:linear-gradient(90deg,rgba(227,230,207,0) 0,rgba(227,230,207,.6) 40%,#e3e6cf 100%)">Transfer</div>
<div class="sum" style="left:1020px;top:357px;width:110px;padding-right:2px">$0.00</div>
<div class="a" style="left:430px;top:505px;width:1241px;height:1px;background:#aaaaa2"></div>
<div class="a" style="left:430px;top:506px;width:1241px;height:25px;background:#dddccb"></div>
<div class="a" style="left:430px;top:531px;width:1241px;height:1px;background:#8fb0e6"></div>
<div class="btab tabf on" style="left:432px;width:73px;padding-right:4px;letter-spacing:.4px">Payment</div>
<div class="btab tabf" style="left:507px;width:71px">Show Bill</div>
<div class="btab tabf" style="left:580px;width:62px">GL Info</div>
<div class="btab tabf" style="left:644px;width:53px">All GL</div>
<div class="btab tabf" style="left:699px;width:81px">Fee Parms</div>
<svg class="a" style="left:1649px;top:510px" width="16" height="16" viewBox="0 0 16 16"><rect width="16" height="16" fill="#c4c8d0"/><rect x="15" width="1" height="16" fill="#5a7ec8"/><path d="M4.5 6.5h7l-3.5 4z" fill="#444"/></svg>
<div class="a" style="left:430px;top:532px;width:1241px;height:27px;background:#fff"></div>
<div class="a" style="left:430px;top:559px;width:1241px;height:1px;background:#939391"></div>
<svg class="a" style="left:439px;top:539px" width="8" height="9" viewBox="0 0 8 9"><path d="M4 .5v8M0 4.5h8" stroke="#000" stroke-width="2.1"/></svg>
<span class="tb" style="left:455px;top:539px;letter-spacing:.4px">Add</span>
<svg class="a" style="left:480px;top:536px" width="14" height="16" viewBox="0 0 14 16"><path d="M2.5 9C2 4.5 4.5 3 8.5 3.3" stroke="#4f88e6" stroke-width="3" fill="none"/><path d="M8 0l5.5 3.6L8 7.2z" fill="#4f88e6"/><path d="M11.5 7c.5 4.5-2 6-6 5.7" stroke="#6c9cee" stroke-width="3" fill="none"/><path d="M6 8.8L.5 12.4 6 16z" fill="#6c9cee"/></svg>
<span class="tb" style="left:496px;top:539px">Refresh</span>
<svg class="a" style="left:538px;top:539px" width="14" height="13" viewBox="0 0 14 13"><defs><linearGradient id="yg1" x1="0" y1="0" x2="0" y2="1"><stop offset="0" stop-color="#fff200"/><stop offset=".5" stop-color="#ffd000"/><stop offset="1" stop-color="#f09000"/></linearGradient></defs><rect x=".6" y=".6" width="3" height="11.8" fill="url(#yg1)" stroke="#000" stroke-width="1.2"/><path d="M12.8 .8v11.4L5 6.5z" fill="url(#yg1)" stroke="#000" stroke-width="1.2" stroke-linejoin="round"/></svg>
<svg class="a" style="left:561px;top:539px" width="10" height="13" viewBox="0 0 10 13"><defs><linearGradient id="yg2" x1="0" y1="0" x2="0" y2="1"><stop offset="0" stop-color="#fff200"/><stop offset=".5" stop-color="#ffd000"/><stop offset="1" stop-color="#f09000"/></linearGradient></defs><path d="M8.8 .8v11.4L1 6.5z" fill="url(#yg2)" stroke="#000" stroke-width="1.2" stroke-linejoin="round"/></svg>
<svg class="a" style="left:580px;top:539px" width="10" height="13" viewBox="0 0 10 13"><defs><linearGradient id="yg3" x1="0" y1="0" x2="0" y2="1"><stop offset="0" stop-color="#fff200"/><stop offset=".5" stop-color="#ffd000"/><stop offset="1" stop-color="#f09000"/></linearGradient></defs><path d="M1.2 .8v11.4L9 6.5z" fill="url(#yg3)" stroke="#000" stroke-width="1.2" stroke-linejoin="round"/></svg>
<svg class="a" style="left:598px;top:539px" width="14" height="13" viewBox="0 0 14 13"><defs><linearGradient id="yg4" x1="0" y1="0" x2="0" y2="1"><stop offset="0" stop-color="#fff200"/><stop offset=".5" stop-color="#ffd000"/><stop offset="1" stop-color="#f09000"/></linearGradient></defs><rect x="10.4" y=".6" width="3" height="11.8" fill="url(#yg4)" stroke="#000" stroke-width="1.2"/><path d="M1.2 .8v11.4L9 6.5z" fill="url(#yg4)" stroke="#000" stroke-width="1.2" stroke-linejoin="round"/></svg>
<svg class="a" style="left:620px;top:536px" width="17" height="16" viewBox="0 0 17 16"><defs><linearGradient id="vg2" x1="0" y1="0" x2="1" y2="1"><stop offset="0" stop-color="#e8f0fc"/><stop offset="1" stop-color="#9cbcee"/></linearGradient></defs><rect x=".5" y=".5" width="16" height="15" fill="url(#vg2)" stroke="#6a7fa6"/><rect x="1" y="1" width="3.5" height="14" fill="#c2cbdc"/><rect x="1.5" y="1" width="1" height="14" fill="#eef2f8"/><path d="M4.8 1v14" stroke="#7f90b2" stroke-width=".8"/><path d="M5.5 3.5h10.5M5.5 6.5h10.5M5.5 9.5h10.5M5.5 12.5h10.5" stroke="#6f96dc" stroke-width="1" opacity=".75"/><path d="M7.5 1v14" stroke="#fff" stroke-width=".8" opacity=".7" stroke-dasharray="1.5 1.5"/></svg>
<span class="tb" style="left:640px;top:539px;letter-spacing:.5px">View</span>
<div class="a" style="left:669px;top:537px;width:1px;height:14px;background:#b8b8b8"></div>
<svg class="a" style="left:672px;top:542px" width="10" height="6" viewBox="0 0 10 6"><path d="M0 .5h10L5 5.5z" fill="#666"/></svg>
<span class="t" style="left:1626px;top:540px;letter-spacing:0">?</span>
<svg class="a" style="left:1653px;top:538px" width="16" height="16" viewBox="0 0 16 16"><defs><radialGradient id="bb4" cx=".5" cy=".5" r=".7"><stop offset="0" stop-color="#86acfa"/><stop offset=".55" stop-color="#4a82f4"/><stop offset="1" stop-color="#1f5ce8"/></radialGradient></defs><rect width="16" height="16" rx="1.2" fill="url(#bb4)"/><path d="M3 6L8 2.8 13 6M3 10l5 3.2L13 10" stroke="#fff" stroke-width="1.8" fill="none" stroke-linecap="round" stroke-linejoin="round"/></svg>
<div class="a" style="left:432px;top:560px;width:750px;height:20px;background:#dedec9;border-top:1px solid #929290;border-bottom:1px solid #929290"></div>
<div class="hd" style="left:434px;top:564px;width:115px;letter-spacing:0">Payment No.</div>
<div class="a" style="left:547px;top:561px;width:1px;height:18px;background:#bdbdae"></div>
<div class="hd" style="left:549px;top:564px;width:104px;letter-spacing:0.15px">Type</div>
<div class="a" style="left:651px;top:561px;width:1px;height:18px;background:#bdbdae"></div>
<div class="hd" style="left:653px;top:564px;width:104px;letter-spacing:0.15px">Date Paid</div>
<div class="a" style="left:755px;top:561px;width:1px;height:18px;background:#bdbdae"></div>
<div class="hd" style="left:757px;top:564px;width:93px;letter-spacing:0.15px">Receipt No.</div>
<div class="a" style="left:848px;top:561px;width:1px;height:18px;background:#bdbdae"></div>
<div class="hd" style="left:849px;top:564px;width:104px;letter-spacing:0.15px">Date Printed</div>
<div class="a" style="left:952px;top:561px;width:1px;height:18px;background:#bdbdae"></div>
<div class="hd" style="left:953px;top:564px;width:115px;letter-spacing:0.2px">Amount Paid</div>
<div class="a" style="left:1067px;top:561px;width:1px;height:18px;background:#bdbdae"></div>
<div class="hd" style="left:1067px;top:564px;width:115px;letter-spacing:0.2px">Amount Applied</div>
<div class="a" style="left:433px;top:580px;width:114px;height:20px;background:#f00"></div>
<div class="a" style="left:432px;top:600px;width:750px;height:1px;background:#e0e0d6"></div>
<div class="a" style="left:547px;top:580px;width:1px;height:20px;background:#deded4"></div>
<div class="a" style="left:651px;top:580px;width:1px;height:20px;background:#deded4"></div>
<div class="a" style="left:755px;top:580px;width:1px;height:20px;background:#deded4"></div>
<div class="a" style="left:848px;top:580px;width:1px;height:20px;background:#deded4"></div>
<div class="a" style="left:952px;top:580px;width:1px;height:20px;background:#deded4"></div>
<div class="a" style="left:1067px;top:580px;width:1px;height:20px;background:#deded4"></div>
<div class="a" style="left:433px;top:601px;width:749px;height:20px;background:#739ad6"></div>
<div class="a" style="left:547px;top:601px;width:1px;height:20px;background:#e8eef8"></div>
<div class="a" style="left:651px;top:601px;width:1px;height:20px;background:#e8eef8"></div>
<div class="a" style="left:755px;top:601px;width:1px;height:20px;background:#e8eef8"></div>
<div class="a" style="left:848px;top:601px;width:1px;height:20px;background:#e8eef8"></div>
<div class="a" style="left:952px;top:601px;width:1px;height:20px;background:#e8eef8"></div>
<div class="a" style="left:1067px;top:601px;width:1px;height:20px;background:#e8eef8"></div>
<span class="cell" style="left:433px;top:583px;width:100px;text-align:right;color:#000">1130503</span>
<span class="cell" style="left:548px;top:583px;color:#000">Check</span>
<span class="cell" style="left:652px;top:584px;color:#000">2016-04-14</span>
<span class="cell" style="left:757px;top:583px;width:80px;text-align:right;color:#000">1130503</span>
<span class="cell" style="left:953px;top:583px;width:101px;text-align:right;color:#000">$753.00</span>
<span class="cell" style="left:1068px;top:583px;width:96px;text-align:right;color:#000">$0.00</span>
<span class="cell" style="left:433px;top:604px;width:100px;text-align:right;color:#fff">1133353</span>
<span class="cell" style="left:548px;top:604px;color:#fff">OFS Assessm...</span>
<span class="cell" style="left:652px;top:605px;color:#fff">2016-04-29</span>
<span class="cell" style="left:757px;top:604px;width:80px;text-align:right;color:#fff">1133353</span>
<span class="cell" style="left:953px;top:604px;width:101px;text-align:right;color:#fff">$753.00</span>
<span class="cell" style="left:1068px;top:604px;width:96px;text-align:right;color:#fff">$753.00</span>
<div class="a" style="left:429px;top:934px;width:1243px;height:24px;background:linear-gradient(#c9defa,#a9c6f0 45%,#86aae2)"></div>
<span class="t" style="left:439px;top:939px;letter-spacing:0.18px">Create Bill</span>
<span class="t" style="left:509px;top:939px;letter-spacing:0.15px">Print Bill</span>
<span class="t" style="left:567px;top:939px;letter-spacing:0.2px">Adjust</span>
<span class="t" style="left:614px;top:939px;letter-spacing:0.25px">Refund</span>
<span class="t" style="left:667px;top:939px;letter-spacing:0.25px">Transfer</span>
<span class="t" style="left:726px;top:939px;letter-spacing:-0.1px">Apply Over Payment</span>
<div class="a" style="left:502px;top:934px;width:1px;height:24px;background:#7d9fd8"></div><div class="a" style="left:503px;top:934px;width:1px;height:24px;background:#d4e3f8"></div>
<div class="a" style="left:560px;top:934px;width:1px;height:24px;background:#7d9fd8"></div><div class="a" style="left:561px;top:934px;width:1px;height:24px;background:#d4e3f8"></div>
<div class="a" style="left:607px;top:934px;width:1px;height:24px;background:#7d9fd8"></div><div class="a" style="left:608px;top:934px;width:1px;height:24px;background:#d4e3f8"></div>
<div class="a" style="left:660px;top:934px;width:1px;height:24px;background:#7d9fd8"></div><div class="a" style="left:661px;top:934px;width:1px;height:24px;background:#d4e3f8"></div>
<div class="a" style="left:719px;top:934px;width:1px;height:24px;background:#7d9fd8"></div><div class="a" style="left:720px;top:934px;width:1px;height:24px;background:#d4e3f8"></div>
<div class="a" style="left:840px;top:934px;width:1px;height:24px;background:#7d9fd8"></div><div class="a" style="left:841px;top:934px;width:1px;height:24px;background:#d4e3f8"></div>
</div>

<div class="a" style="left:1674px;top:75px;width:1px;height:883px;background:#a4a4a0"></div>
<!-- STATUS BAR -->
<div id="status">
<div class="a" style="left:0;top:961px;width:1680px;height:1px;background:#bcbcbc"></div>
<div class="a" style="left:0;top:962px;width:1680px;height:24px;background:#f0f0f0;border-top:1px solid #d6d6d6"></div>
<div class="a" style="left:0;top:986px;width:1680px;height:3px;background:linear-gradient(90deg,#56662c,#63733a 12%,#4f5f28 27%,#5e6e34 45%,#52622a 63%,#65753c 80%,#55652c)"></div>
<div class="a" style="left:254px;top:987px;width:58px;height:2px;background:#8f9a74;border-top:1px solid #e4e8dc"></div>
<div class="a" style="left:440px;top:987px;width:58px;height:2px;background:#707e4c;border-top:1px solid #a4ae8c"></div>
<div class="a" style="left:502px;top:987px;width:58px;height:2px;background:#707e4c;border-top:1px solid #a4ae8c"></div>
<div class="a" style="left:564px;top:987px;width:58px;height:2px;background:#707e4c;border-top:1px solid #a4ae8c"></div>
<div class="a" style="left:626px;top:987px;width:58px;height:2px;background:#707e4c;border-top:1px solid #a4ae8c"></div>
<svg class="a" style="left:1591px;top:968px" width="13" height="13" viewBox="0 0 13 13"><path d="M7.5 7.5l4.3 4.3" stroke="#a8642a" stroke-width="2.2" stroke-linecap="round"/><circle cx="5" cy="5" r="4.2" fill="#eef4fc" stroke="#8a98a8" stroke-width="1.1"/><path d="M5 2.5v5M2.5 5h5" stroke="#1a5ac8" stroke-width="1.7"/></svg>
<span class="t" style="left:1606px;top:968px;letter-spacing:-.75px">100%</span>
<svg class="a" style="left:1650px;top:973px" width="7" height="4" viewBox="0 0 7 4"><path d="M0 0h7L3.5 4z" fill="#222"/></svg>
<svg class="a" style="left:1668px;top:975px" width="10" height="10" viewBox="0 0 10 10"><g fill="#b8b8b8"><rect x="7" y="1" width="2" height="2"/><rect x="4" y="4" width="2" height="2"/><rect x="7" y="4" width="2" height="2"/><rect x="1" y="7" width="2" height="2"/><rect x="4" y="7" width="2" height="2"/><rect x="7" y="7" width="2" height="2"/></g></svg>
</div>
</body>
</html>
